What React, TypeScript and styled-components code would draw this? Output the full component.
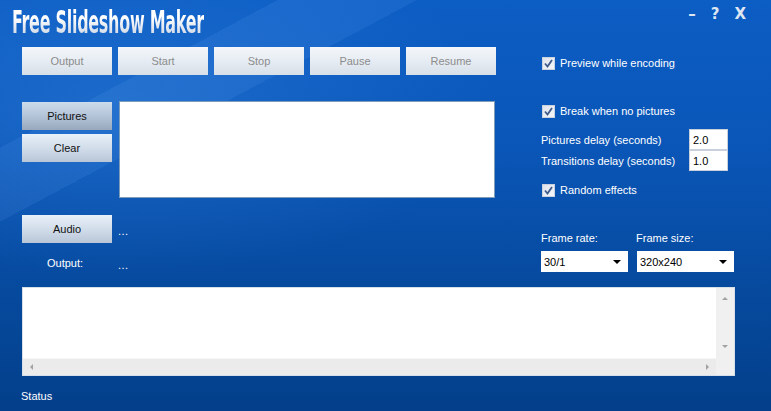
import React from "react";
import styled, { createGlobalStyle } from "styled-components";

const GlobalStyle = createGlobalStyle`
    html, body {
        margin: 0;
        padding: 0;
        background: #003e8a;
    }
`;

const Window = styled.div`
    position: relative;
    width: 771px;
    height: 411px;
    overflow: hidden;
    display: flex;
    flex-direction: column;
    font-family: "Liberation Sans", Arial, sans-serif;
    font-size: 11px;
    color: #fff;
    background:
        linear-gradient(152deg, transparent 0 18%, rgba(120, 180, 255, 0.10) 18% 27%, transparent 27%),
        radial-gradient(ellipse 70% 60% at 15% 25%, rgba(60, 140, 230, 0.35), transparent 70%),
        linear-gradient(180deg, #0c5dc4 0%, #0a56b8 35%, #064a9e 70%, #033f8a 100%);
`;

const Header = styled.div`
    height: 40px;
    display: flex;
    justify-content: space-between;
    align-items: flex-start;
    padding: 0 25px 0 12px;
`;

const Title = styled.h1`
    margin: 5px 0 0;
    display: inline-block;
    font-family: "DejaVu Sans Condensed", "DejaVu Sans", sans-serif;
    font-weight: bold;
    font-size: 32px;
    letter-spacing: -0.5px;
    line-height: 34px;
    transform: scaleX(0.555);
    transform-origin: left center;
    white-space: nowrap;
    background: linear-gradient(180deg, #ffffff 35%, #c5d1e2 100%);
    -webkit-background-clip: text;
    background-clip: text;
    color: transparent;
`;

const Controls = styled.div`
    display: flex;
    gap: 15px;
    margin-top: 5px;
    font-family: "DejaVu Sans", sans-serif;
    font-weight: bold;
    font-size: 15px;
    color: #dde6f2;
`;

const Body = styled.div`
    display: flex;
    gap: 43px;
    height: 247px;
    padding: 0 36px 0 22px;
`;

const LeftColumn = styled.div`
    width: 476px;
    display: flex;
    flex-direction: column;
`;

const Toolbar = styled.div`
    display: flex;
    gap: 6px;
    margin-top: 7px;
`;

const Button = styled.button<{ $tone?: "idle" | "dark" | "light" }>`
    width: 90px;
    height: 28px;
    padding: 0;
    border: none;
    font-family: "Liberation Sans", Arial, sans-serif;
    font-size: 11px;
    color: ${p => (p.$tone === "idle" ? "#8c8c8c" : "#111")};
    background: ${p =>
        p.$tone === "dark"
            ? "linear-gradient(180deg, #cddcec 0%, #b4c4d8 50%, #97a8bd 100%)"
            : p.$tone === "light"
            ? "linear-gradient(180deg, #e8f0f9 0%, #d2ddea 50%, #b8c6d7 100%)"
            : "linear-gradient(180deg, #f4f7fb 0%, #e6ecf3 50%, #d7dfe8 100%)"};
`;

const MediaRow = styled.div`
    display: flex;
    gap: 7px;
    margin-top: 26px;
`;

const ButtonStack = styled.div`
    display: flex;
    flex-direction: column;
    gap: 4px;
    margin-top: 1px;
`;

const PictureList = styled.div`
    width: 376px;
    height: 97px;
    box-sizing: border-box;
    background: #fff;
    border: 1px solid #7f9db9;
`;

const FileRow = styled.div<{ $gap: number }>`
    display: flex;
    align-items: center;
    gap: 6px;
    margin-top: ${p => p.$gap}px;
`;

const Dots = styled.span`
    padding-top: 4px;
    letter-spacing: 0.5px;
`;

const OutputLabel = styled.span`
    width: 90px;
    padding-right: 4px;
    box-sizing: border-box;
    text-align: center;
    line-height: 16px;
`;

const RightColumn = styled.div`
    width: 194px;
    display: flex;
    flex-direction: column;
`;

const CheckRow = styled.label<{ $gap: number }>`
    display: flex;
    align-items: center;
    gap: 5px;
    height: 14px;
    margin-top: ${p => p.$gap}px;
    margin-left: 1px;
    white-space: nowrap;
`;

const CheckBox = styled.span`
    width: 13px;
    height: 13px;
    box-sizing: border-box;
    border: 1px solid #c9d2de;
    background: linear-gradient(135deg, #dfe4ec 0%, #f4f6f9 100%);
    display: flex;
    align-items: center;
    justify-content: center;
`;

const DelayGrid = styled.div`
    display: grid;
    grid-template-columns: 148px 39px;
    grid-auto-rows: 21px;
    row-gap: 0;
    margin-top: 11px;
    align-items: center;
`;

const DelayInput = styled.div<{ $first?: boolean }>`
    height: 21px;
    box-sizing: border-box;
    margin-top: ${p => (p.$first ? 0 : -1)}px;
    border: 1px solid #c8d0dc;
    background: #fff;
    color: #000;
    padding: 3px 0 0 3px;
    line-height: 14px;
`;

const FrameGrid = styled.div`
    display: grid;
    grid-template-columns: 87px 97px;
    column-gap: 9px;
    row-gap: 6px;
    margin-top: 34px;
    line-height: 14px;
`;

const FrameLabel = styled.span<{ $shift?: number }>`
    margin-left: ${p => p.$shift ?? 0}px;
`;

const Select = styled.div`
    height: 21px;
    box-sizing: border-box;
    background: #fff;
    color: #000;
    display: flex;
    align-items: center;
    justify-content: space-between;
    padding: 0 7px 0 3px;
`;

const Caret = styled.span`
    width: 0;
    height: 0;
    border-left: 4px solid transparent;
    border-right: 4px solid transparent;
    border-top: 4px solid #000;
`;

const LogBox = styled.div`
    margin: 0 36px 0 22px;
    height: 89px;
    box-sizing: border-box;
    border: 1px solid #d6dee8;
    background: #fff;
    display: grid;
    grid-template-columns: 1fr 18px;
    grid-template-rows: 1fr 17px;
`;

const VTrack = styled.div`
    background: #f0f0f0;
    display: flex;
    flex-direction: column;
    justify-content: space-between;
    align-items: center;
    padding: 9px 0 10px;
`;

const HTrack = styled.div`
    background: #ebebeb;
    border-top: 1px solid #f6f6f6;
    display: flex;
    justify-content: space-between;
    align-items: center;
    padding: 0 7px 0 7px;
`;

const Corner = styled.div`
    background: #f0f0f0;
`;

const Arrow = styled.span<{ $dir: "up" | "down" | "left" | "right" }>`
    width: 0;
    height: 0;
    ${p =>
        p.$dir === "up"
            ? "border-left: 3px solid transparent; border-right: 3px solid transparent; border-bottom: 3px solid #a2a2a2;"
            : p.$dir === "down"
            ? "border-left: 3px solid transparent; border-right: 3px solid transparent; border-top: 3px solid #a2a2a2;"
            : p.$dir === "left"
            ? "border-top: 3px solid transparent; border-bottom: 3px solid transparent; border-right: 3px solid #a2a2a2;"
            : "border-top: 3px solid transparent; border-bottom: 3px solid transparent; border-left: 3px solid #a2a2a2;"}
`;

const Status = styled.div`
    margin: 13px 0 0 21px;
    line-height: 14px;
`;

const Check = ({ label, gap }: { label: string; gap: number }) => (
    <CheckRow $gap={gap}>
        <CheckBox>
            <svg width="9" height="9" viewBox="0 0 9 9">
                <path d="M1 4.5 L3.5 7.5 L8 1" fill="none" stroke="#3f5b8c" strokeWidth="1.8" />
            </svg>
        </CheckBox>
        {label}
    </CheckRow>
);

const toolbarButtons = ["Output", "Start", "Stop", "Pause", "Resume"];

const App = () => {
    return <Window>
        <GlobalStyle />
        <Header>
            <Title>Free Slideshow Maker</Title>
            <Controls>
                <span>–</span>
                <span>?</span>
                <span>X</span>
            </Controls>
        </Header>

        <Body>
            <LeftColumn>
                <Toolbar>
                    {toolbarButtons.map(name => <Button key={name} $tone="idle">{name}</Button>)}
                </Toolbar>

                <MediaRow>
                    <ButtonStack>
                        <Button $tone="dark">Pictures</Button>
                        <Button $tone="light">Clear</Button>
                    </ButtonStack>
                    <PictureList />
                </MediaRow>

                <FileRow $gap={17}>
                    <Button $tone="light">Audio</Button>
                    <Dots>...</Dots>
                </FileRow>
                <FileRow $gap={12}>
                    <OutputLabel>Output:</OutputLabel>
                    <Dots>...</Dots>
                </FileRow>
            </LeftColumn>

            <RightColumn>
                <Check label="Preview while encoding" gap={16} />
                <Check label="Break when no pictures" gap={34} />

                <DelayGrid>
                    <span>Pictures delay (seconds)</span>
                    <DelayInput $first>2.0</DelayInput>
                    <span>Transitions delay (seconds)</span>
                    <DelayInput>1.0</DelayInput>
                </DelayGrid>

                <Check label="Random effects" gap={12} />

                <FrameGrid>
                    <FrameLabel>Frame rate:</FrameLabel>
                    <FrameLabel $shift={-1}>Frame size:</FrameLabel>
                    <Select>30/1<Caret /></Select>
                    <Select>320x240<Caret /></Select>
                </FrameGrid>
            </RightColumn>
        </Body>

        <LogBox>
            <div />
            <VTrack>
                <Arrow $dir="up" />
                <Arrow $dir="down" />
            </VTrack>
            <HTrack>
                <Arrow $dir="left" />
                <Arrow $dir="right" />
            </HTrack>
            <Corner />
        </LogBox>

        <Status>Status</Status>
    </Window>
}

export default App;
